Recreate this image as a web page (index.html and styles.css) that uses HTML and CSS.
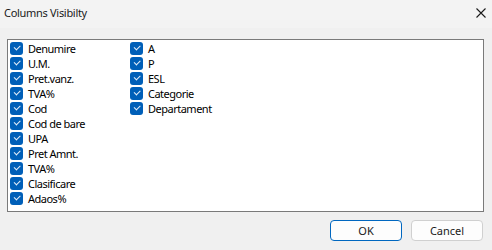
FILE: index.html
```html
<!DOCTYPE html>
<html lang="en">
<head>
    <meta charset="UTF-8">
    <title>Columns Visibilty</title>
    <link rel="stylesheet" href="styles.css">
</head>
<body>
    <div class="dialog">
        <div class="titlebar">
            <span class="title">Columns Visibilty</span>
            <span class="close">
                <svg width="10" height="10" viewBox="0 0 10 10"><path d="M0.5 0.5 L9.5 9.5 M9.5 0.5 L0.5 9.5" stroke="#1a1a1a" stroke-width="1.1" fill="none"/></svg>
            </span>
        </div>
        <div class="content">
            <div class="list">
                <div class="col">
                    <label class="item"><span class="box"></span>Denumire</label>
                    <label class="item"><span class="box"></span>U.M.</label>
                    <label class="item"><span class="box"></span>Pret.vanz.</label>
                    <label class="item"><span class="box"></span>TVA%</label>
                    <label class="item"><span class="box"></span>Cod</label>
                    <label class="item"><span class="box"></span>Cod de bare</label>
                    <label class="item"><span class="box"></span>UPA</label>
                    <label class="item"><span class="box"></span>Pret Amnt.</label>
                    <label class="item"><span class="box"></span>TVA%</label>
                    <label class="item"><span class="box"></span>Clasificare</label>
                    <label class="item"><span class="box"></span>Adaos%</label>
                </div>
                <div class="col">
                    <label class="item"><span class="box"></span>A</label>
                    <label class="item"><span class="box"></span>P</label>
                    <label class="item"><span class="box"></span>ESL</label>
                    <label class="item"><span class="box"></span>Categorie</label>
                    <label class="item"><span class="box"></span>Departament</label>
                </div>
            </div>
            <div class="buttons">
                <button class="btn btn-default">OK</button>
                <button class="btn">Cancel</button>
            </div>
        </div>
    </div>
</body>
</html>
```
FILE: styles.css
```css
* {
    box-sizing: border-box;
    margin: 0;
    padding: 0;
    font-family: 'Noto Sans', 'Open Sans', sans-serif;
}

body {
    background-color: #f0f0f0;
    width: 492px;
    height: 250px;
    overflow: hidden;
}

.dialog {
    width: 492px;
    height: 250px;
    display: flex;
    flex-direction: column;
}

.titlebar {
    height: 28px;
    background-color: #f3f3f3;
    display: flex;
    align-items: center;
    justify-content: space-between;
    padding: 0 6px 2px 4px;
}

.title {
    font-size: 11px;
    line-height: 14px;
    letter-spacing: -0.3px;
    color: #1a1a1a;
}

.close {
    display: flex;
}

.content {
    padding: 11px 8px 0 7px;
}

.list {
    height: 173px;
    background-color: #ffffff;
    border: 1px solid #7a7a7a;
    padding: 1px 2px;
    display: flex;
}

.col {
    width: 120px;
    display: flex;
    flex-direction: column;
}

.item {
    height: 15px;
    line-height: 15px;
    display: flex;
    align-items: center;
    font-size: 11px;
    letter-spacing: -0.5px;
    color: #000000;
    white-space: nowrap;
}

.box {
    width: 13px;
    height: 13px;
    border-radius: 3px;
    background-color: #005fb8;
    margin-right: 5px;
    position: relative;
    flex-shrink: 0;
}

.box::after {
    content: "";
    position: absolute;
    left: 4px;
    top: 3px;
    width: 5px;
    height: 2.5px;
    border-left: 1px solid #e8f0fa;
    border-bottom: 1px solid #e8f0fa;
    transform: rotate(-45deg);
}

.buttons {
    display: flex;
    justify-content: flex-end;
    gap: 9px;
    margin-top: 8px;
    padding-right: 1px;
}

.btn {
    width: 72px;
    height: 21px;
    font-size: 11px;
    color: #1a1a1a;
    background-color: #fdfdfd;
    border: 1px solid #d0d0d0;
    border-radius: 4px;
}

.btn-default {
    border: 1px solid #0067c0;
}
```
